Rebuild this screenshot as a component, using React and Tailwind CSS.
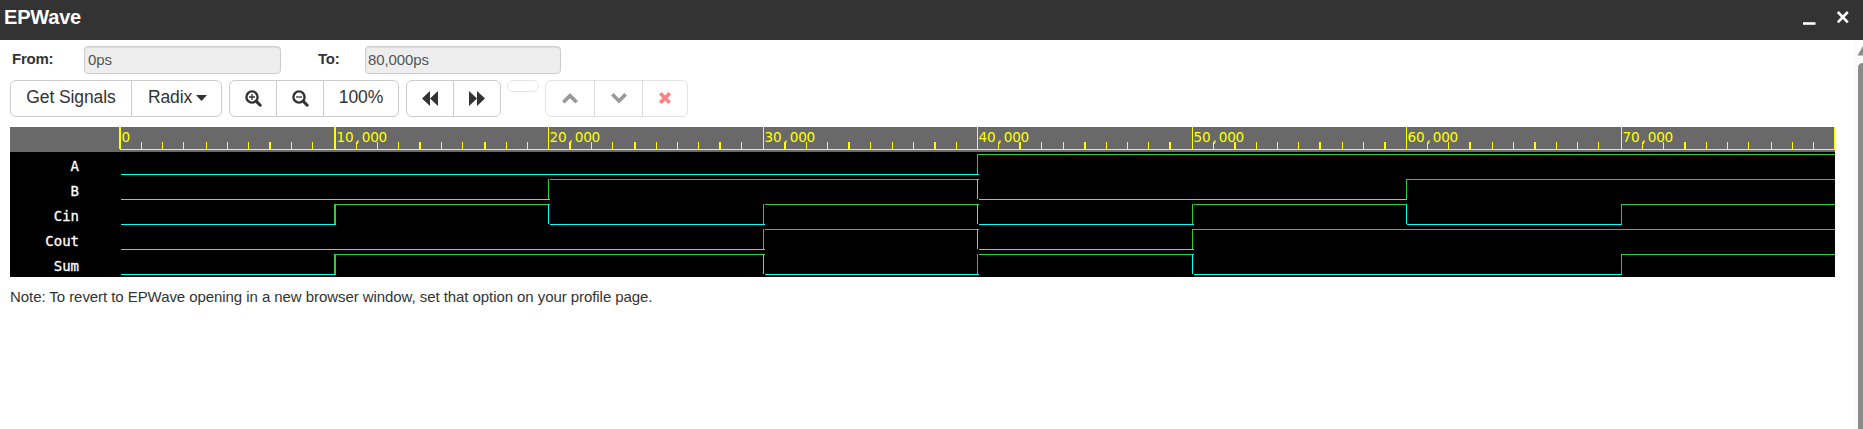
import React from "react";

const MAJORS = [
  { x: 119, w: 2, t: "0" },
  { x: 334, w: 2, t: "10,000" },
  { x: 548, w: 1, t: "20,000" },
  { x: 763, w: 1, t: "30,000" },
  { x: 977, w: 1, t: "40,000" },
  { x: 1192, w: 1, t: "50,000" },
  { x: 1406, w: 1, t: "60,000" },
  { x: 1621, w: 1, t: "70,000" },
];
const MINORS = [
  141, 162, 183, 206, 227, 248, 269, 291, 312,
  356, 377, 398, 419, 441, 462, 484, 506, 527,
  569, 591, 612, 634, 656, 677, 698, 719, 741,
  784, 806, 827, 848, 870, 892, 913, 934, 956,
  998, 1019, 1041, 1063, 1084, 1106, 1127, 1148, 1169,
  1213, 1234, 1256, 1277, 1298, 1319, 1342, 1363, 1384,
  1427, 1448, 1469, 1492, 1513, 1534, 1556, 1577, 1598,
  1642, 1663, 1684, 1706, 1727, 1748, 1771, 1792, 1813,
];
const WIDE_MINORS = [269, 419, 484, 569, 634, 719, 784, 848, 934, 1019, 1084, 1169, 1234, 1319, 1384, 1469, 1534, 1684];
const EDGE = [120, 334, 548, 763, 977, 1192, 1406, 1621, 1835];

// "joined" lists the edges where the new level starts right at the transition.
const SIGNALS = [
  { name: "A", bits: "00001111", joined: [4] },
  { name: "B", bits: "00110011", joined: [6] },
  { name: "Cin", bits: "01010101", joined: [6, 7] },
  { name: "Cout", bits: "00010111", joined: [5] },
  { name: "Sum", bits: "01101001", joined: [7] },
];

function Ruler() {
  return (
    <svg width="1825" height="25" viewBox="10 127 1825 25" className="block bg-[#696969]" shapeRendering="crispEdges">
      {MINORS.map((x) => (
        <rect key={x} x={x} y="142" width={WIDE_MINORS.includes(x) ? 2 : 1} height="7" fill="#ff0" />
      ))}
      {MAJORS.map((m) => (
        <g key={m.t} fill="#ff0">
          <rect x={m.x} y="127" width={m.w} height="22" />
          <text
            y="142"
            x={m.t.split("").map((_, k) => m.x + m.w + 4.8 + k * 8.43).join(" ")}
            textAnchor="middle"
            className="font-['DejaVu_Sans',sans-serif] text-[13.6px]"
          >
            {m.t}
          </text>
        </g>
      ))}
      <rect x="1834" y="127" width="1" height="22" fill="#ff0" />
      <rect x="120" y="149" width="1715" height="1" fill="#ff0" />
    </svg>
  );
}

function Wave({ bits, joined }) {
  const parts = [];
  for (let i = 0; i < 8; i++) {
    const on = bits[i] === "1";
    const color = on ? "#32cd32" : "#00ffff";
    const turned = i > 0 && bits[i - 1] !== bits[i];
    const fallsShort = joined.includes(i) && !on ? 1 : 0;
    const start = i === 0 ? 121 : EDGE[i] + (turned && !joined.includes(i) ? 2 : fallsShort);
    const end = EDGE[i + 1] + (i + 1 >= 6 ? 1 : 2);
    parts.push(<rect key={"h" + i} x={start} y={on ? 2 : 22} width={end - start} height="1" fill={color} />);
    if (turned) {
      parts.push(<rect key={"v" + i} x={EDGE[i]} y="2" width={i === 1 ? 2 : 1} height="20" fill={color} />);
    }
  }
  return (
    <svg width="1715" height="25" viewBox="120 0 1715 25" className="block" shapeRendering="crispEdges">
      {parts}
    </svg>
  );
}

function Group({ className = "", faded = false, children }) {
  return (
    <div className={"flex h-[37px] rounded-[6px] border divide-x " + (faded ? "border-[#e3e3e3] divide-[#dcdcdc] " : "border-[#ccc] divide-[#ccc] ") + className}>
      {children}
    </div>
  );
}

function Cell({ className, children }) {
  return <button className={"flex items-center justify-center pb-px text-[17.5px] leading-none tracking-[-0.1px] " + className}>{children}</button>;
}

function Glyph({ w = 18, h = 18, box, d, fill = "#333" }) {
  return (
    <svg width={w} height={h} viewBox={box} fill={fill}>
      <path d={d} />
    </svg>
  );
}

function Magnifier({ plus }) {
  return (
    <svg width="17" height="17" viewBox="0 0 17 17" fill="none" stroke="#333">
      <circle cx="7" cy="7" r="5.6" strokeWidth="2.4" />
      <path d="M11.6 11.6l3.6 3.6" strokeWidth="3" strokeLinecap="round" />
      <path d={plus ? "M4 7h6M7 4v6" : "M4 7h6"} strokeWidth="1.3" />
    </svg>
  );
}

export default function App() {
  return (
    <div className="flex h-[429px] w-[1863px] flex-col overflow-hidden bg-white font-['Liberation_Sans',Arial,sans-serif] text-[#333]">
      <header className="flex h-10 shrink-0 justify-between bg-[#333] text-white">
        <h1 className="pl-1 pt-[5px] text-[20px] font-bold leading-6 tracking-[-0.2px]">EPWave</h1>
        <svg width="63" height="40" viewBox="0 0 63 40" stroke="#fff" fill="none">
          <path d="M3 23.5h12.5" strokeWidth="2.6" />
          <path d="M37.8 12l10 10.4M47.8 12l-10 10.4" strokeWidth="2.6" />
        </svg>
      </header>
      <div className="flex min-h-0 flex-1 justify-between">
        <main className="ml-[10px] w-[1825px]">
          <div className="flex h-10 items-start pt-[6px] text-[15px] tracking-[-0.1px]">
            <label className="w-[74px] pl-[2px] pt-[4px] font-bold leading-[18px] tracking-[-0.25px]">From:</label>
            <div className="h-7 w-[197px] rounded-[4px] border border-[#ccc] bg-[#eee] pl-[3px] leading-[26px] text-[#555] shadow-[inset_0_1px_1px_rgba(0,0,0,0.075)]">0ps</div>
            <label className="ml-[37px] w-[47px] pt-[4px] font-bold leading-[18px] tracking-[-0.25px]">To:</label>
            <div className="h-7 w-[196px] rounded-[4px] border border-[#ccc] bg-[#eee] pl-[2px] leading-[26px] text-[#555] shadow-[inset_0_1px_1px_rgba(0,0,0,0.075)]">80,000ps</div>
          </div>
          <div className="flex h-[47px] items-start">
            <Group className="w-[212px]">
              <Cell className="w-[121px]">Get Signals</Cell>
              <Cell className="flex-1 gap-[4px] pl-[2px]">
                Radix
                <Glyph w={11} h={6} box="0 0 11 6" d="M0 0h11L5.5 6z" />
              </Cell>
            </Group>
            <Group className="ml-[7px] w-[170px]">
              <Cell className="w-[47px]"><Magnifier plus /></Cell>
              <Cell className="w-[47px]"><Magnifier /></Cell>
              <Cell className="flex-1">100%</Cell>
            </Group>
            <Group className="ml-[7px] w-[95px]">
              <Cell className="w-[47px]"><Glyph w={16} h={15} box="0 0 16 15" d="M8 0v15L0 7.5zM16 0v15L8 7.5z" /></Cell>
              <Cell className="flex-1"><Glyph w={16} h={15} box="0 0 16 15" d="M0 0v15L8 7.5zM8 0v15l8-7.5z" /></Cell>
            </Group>
            <div className="ml-[6px] h-3 w-8 rounded-[6px] border border-[#e6e6e6]" />
            <Group faded className="ml-[6px] w-[143px]">
              <Cell className="w-[49px]"><Glyph w={16} h={11} box="0 0 16 11" d="M8 0l8 8-2.6 2.6L8 5.2 2.6 10.6 0 8z" fill="#999" /></Cell>
              <Cell className="w-[48px]"><Glyph w={16} h={11} box="0 0 16 11" d="M8 10.6l8-8L13.4 0 8 5.4 2.6 0 0 2.6z" fill="#999" /></Cell>
              <Cell className="flex-1"><Glyph w={12} h={12} box="0 0 12 12" d="M2.6 0L6 3.4 9.4 0 12 2.6 8.6 6 12 9.4 9.4 12 6 8.6 2.6 12 0 9.4 3.4 6 0 2.6z" fill="#ff8080" /></Cell>
            </Group>
          </div>
          <Ruler />
          <div className="bg-black">
            {SIGNALS.map((s) => (
              <div key={s.name} className="flex h-[25px]">
                <div className="mr-[41px] w-[69px] pt-[6px] text-right font-['DejaVu_Sans_Mono',monospace] text-[14px] leading-4 text-white [-webkit-text-stroke:0.3px_white]">{s.name}</div>
                <Wave bits={s.bits} joined={s.joined} />
              </div>
            ))}
          </div>
          <p className="mt-[11px] text-[15px] leading-[18px] tracking-[-0.065px]">Note: To revert to EPWave opening in a new browser window, set that option on your profile page.</p>
        </main>
        <div className="w-[9px] overflow-hidden bg-[#fcfcfc]">
          <svg width="9" height="389" viewBox="0 0 9 389" fill="#8b8b8b">
            <path d="M3.5 15.5L9 6v9.5z" />
            <path d="M4 389V28q0-5 5-5v366z" />
          </svg>
        </div>
      </div>
    </div>
  );
}
